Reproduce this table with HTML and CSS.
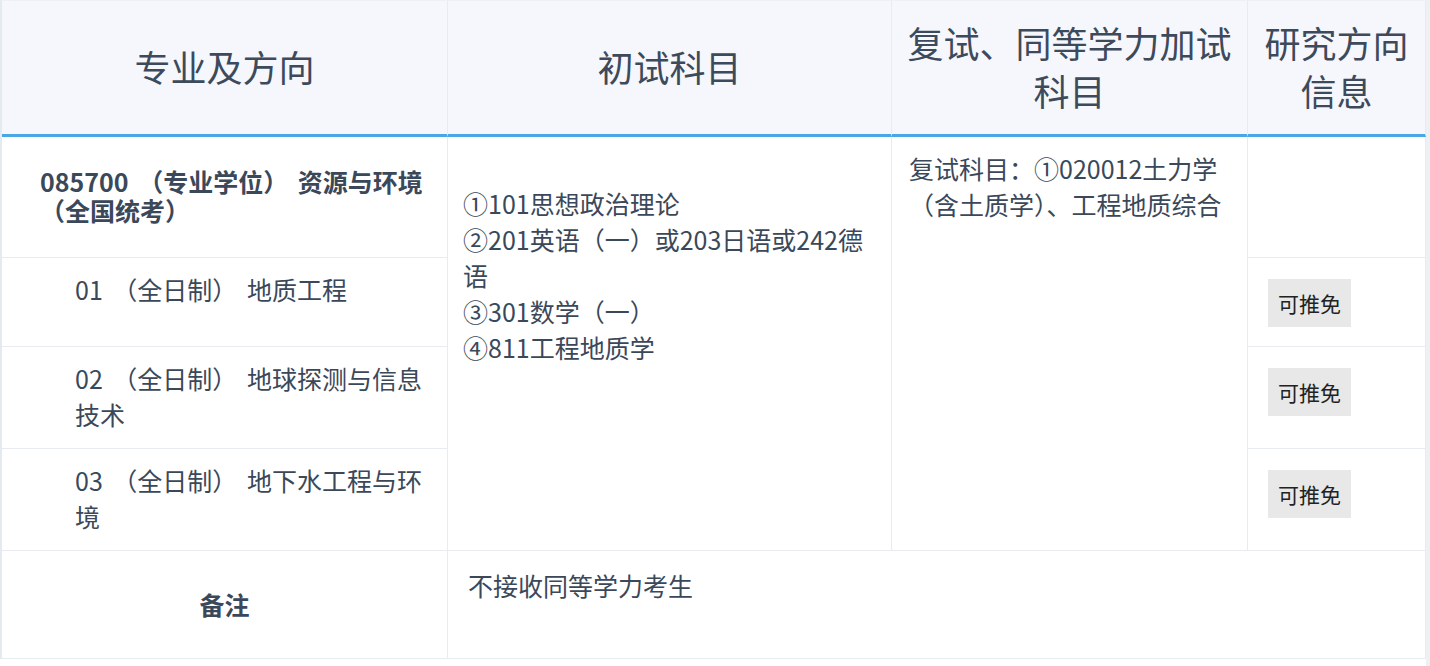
FILE: index.html
```html
<!DOCTYPE html>
<html lang="zh-CN">
<head>
<meta charset="utf-8">
<title>专业目录</title>
<link rel="stylesheet" href="styles.css">
</head>
<body>
<div class="page">
  <table class="catalog">
    <colgroup>
      <col class="c1"><col class="c2"><col class="c3"><col class="c4">
    </colgroup>
    <thead>
      <tr>
        <th>专业及方向</th>
        <th>初试科目</th>
        <th>复试、同等学力加试科目</th>
        <th>研究方向信息</th>
      </tr>
    </thead>
    <tbody>
      <tr>
        <td class="major">085700 （专业学位） 资源与环境（全国统考）</td>
        <td class="exam" rowspan="4">①101思想政治理论<br>②201英语（一）或203日语或242德语<br>③301数学（一）<br>④811工程地质学</td>
        <td class="retest" rowspan="4">复试科目：①020012土力学（含土质学）、工程地质综合</td>
        <td class="info"></td>
      </tr>
      <tr>
        <td class="dir">01 （全日制） 地质工程</td>
        <td class="info"><span class="badge">可推免</span></td>
      </tr>
      <tr>
        <td class="dir">02 （全日制） 地球探测与信息技术</td>
        <td class="info"><span class="badge">可推免</span></td>
      </tr>
      <tr>
        <td class="dir">03 （全日制） 地下水工程与环境</td>
        <td class="info"><span class="badge">可推免</span></td>
      </tr>
      <tr>
        <td class="note-label">备注</td>
        <td class="note" colspan="3">不接收同等学力考生</td>
      </tr>
    </tbody>
  </table>
  <div class="edge"></div>
</div>
</body>
</html>
```
FILE: styles.css
```css
html, body {
  margin: 0;
  padding: 0;
  background: #ffffff;
}
body {
  font-family: "Noto Sans CJK SC", "Noto Sans", sans-serif;
  color: #3b4859;
}
.page {
  display: flex;
  align-items: stretch;
  min-height: 666px;
}
.edge {
  width: 4px;
  flex: 0 0 4px;
  background: #eef1f4;
}
.catalog {
  width: 1426px;
  flex: 0 0 1426px;
  align-self: flex-start;
  table-layout: fixed;
  border-collapse: separate;
  border-spacing: 0;
  border-left: 2px solid #e3ebf0;
  border-top: 1px solid #edf0f4;
}
.c1 { width: 446px; }
.c2 { width: 444px; }
.c3 { width: 356px; }
.c4 { width: 178px; }

th, td {
  border-right: 1px solid #e8ecf0;
  border-bottom: 1px solid #e8ecf0;
  padding: 15px;
  text-align: left;
  vertical-align: top;
}
thead th {
  background: #f5f7fc;
  font-size: 36px;
  font-weight: 400;
  line-height: 48px;
  text-align: center;
  vertical-align: middle;
  padding: 17px 15px 20px;
  border-bottom: 3px solid #4ba6e6;
  color: #3d4a5b;
}
td {
  font-size: 25px;
  line-height: 36px;
}
.major {
  font-weight: 700;
  line-height: 29px;
  vertical-align: middle;
  word-spacing: 4px;
  padding: 30px 15px 32px 38px;
}
.dir {
  word-spacing: 4px;
  padding: 13px 15px 16px 73px;
}
.exam {
  padding: 48px 15px 15px 15px;
}
.retest {
  padding: 13px 15px 15px 17px;
}
.info {
  padding: 21px 20px 19px 20px;
}
.badge {
  display: inline-block;
  background: #e8e8e8;
  color: #222222;
  font-size: 21px;
  line-height: 36px;
  padding: 6px 10px;
}
.note-label {
  font-weight: 700;
  text-align: center;
  vertical-align: middle;
  padding: 35px 15px 36px;
}
.note {
  padding: 16px 20px 15px 20px;
}
```
